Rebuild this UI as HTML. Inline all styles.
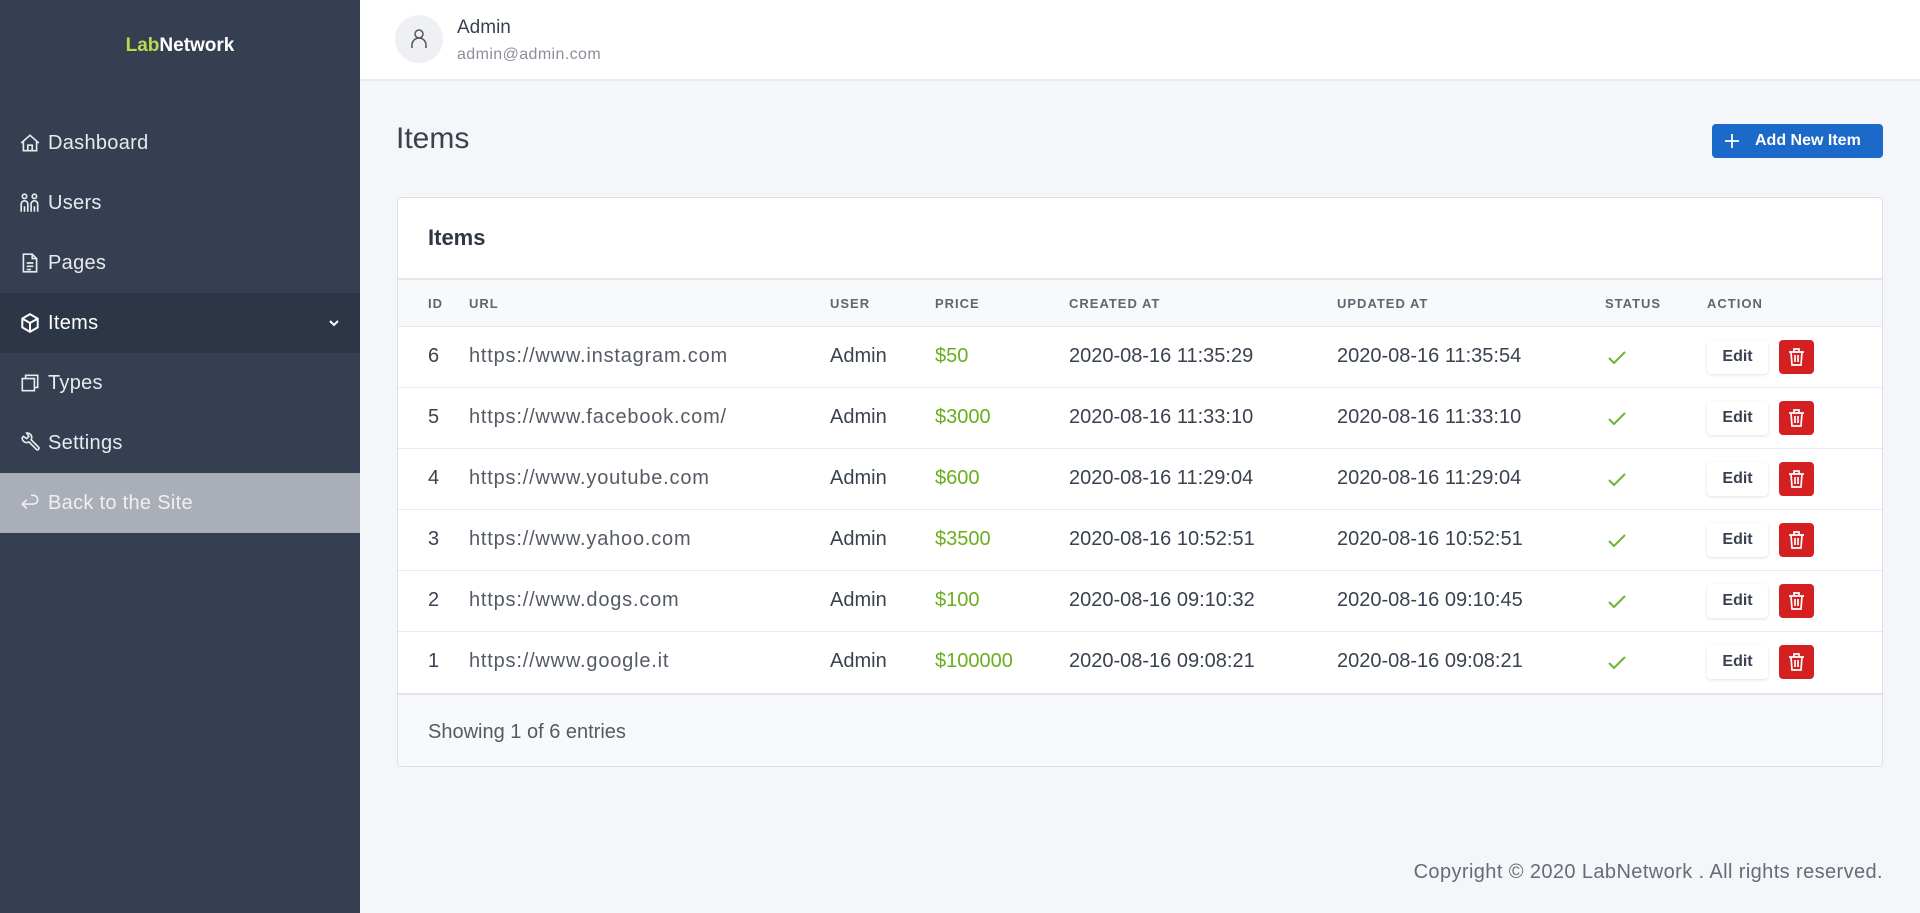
<!DOCTYPE html>
<html><head><meta charset="utf-8"><style>
*{box-sizing:border-box;margin:0;padding:0}
body{width:1920px;height:913px;overflow:hidden;background:#f4f6f9;font-family:"Liberation Sans",sans-serif;color:#3a4250;position:relative}
.side{position:absolute;left:0;top:0;width:360px;height:913px;background:#353f51}
.logo{position:absolute;top:35px;width:360px;text-align:center;font-weight:bold;font-size:19px;color:#fff}
.logo span{color:#b5dc50}
.nav{position:absolute;left:0;width:360px;height:60px;color:#e8eaee;font-size:20px;line-height:60px;padding-left:48px;letter-spacing:0.3px}
.nav svg{position:absolute;left:19px;top:19px}
.act{background:#2d3646;color:#fff}
.back{background:#a9aeb7;color:#eef0f3}
.hdr{position:absolute;left:360px;top:0;right:0;height:81px;background:#fff;border-bottom:2px solid #e6e9ee}
.av{position:absolute;left:395px;top:15px;width:48px;height:48px;border-radius:50%;background:#eef0f4}
.t{position:absolute;white-space:nowrap}
.card{position:absolute;left:397px;top:197px;width:1486px;height:570px;background:#fff;border:1px solid #dcdfe4;border-radius:4px;overflow:hidden}
.th{position:absolute;left:0;top:80px;width:100%;height:49px;background:#f8f9fa;border-top:2px solid #e4e7eb;border-bottom:1px solid #e4e7eb}
.th div{position:absolute;top:16px;font-size:13px;font-weight:bold;color:#5f6670;letter-spacing:1px}
.row{position:absolute;left:0;width:100%;height:61px;border-bottom:1px solid #e8eaed;font-size:20px;color:#3a4250}
.row div{position:absolute;top:18px;white-space:nowrap}
.u{color:#555b65;letter-spacing:0.8px}
.foot{position:absolute;left:0;top:495px;width:100%;height:75px;background:#f8f9fa;border-top:2px solid #e1e4e8}
.edit{top:13px!important;width:61px;height:34px;border-radius:4px;background:#fff;box-shadow:0 1px 3px rgba(0,0,0,.12);font-size:16px;font-weight:bold;text-align:center;line-height:34px;color:#3a4250}
.del{top:13px!important;width:35px;height:34px;border-radius:4px;background:#d42020}
</style></head><body>
<div class="side">
<div class="logo"><span>Lab</span>Network</div>
<div class="nav" style="top:113px"><svg width="22" height="22" viewBox="0 0 20 20" fill="none" stroke="#e8eaee" stroke-width="1.5"><path d="M2 10L10 3l8 7M4 8v9h12V8M8 17v-5h4v5"/></svg>Dashboard</div>
<div class="nav" style="top:173px"><svg width="22" height="22" viewBox="0 0 20 20" fill="none" stroke="#e8eaee" stroke-width="1.5"><circle cx="5" cy="4" r="2"/><circle cx="14" cy="4" r="2"/><path d="M2 18v-7a3 3 0 0 1 6 0v7M5 13v5M11 18v-7a3 3 0 0 1 6 0v7M14 13v5"/></svg>Users</div>
<div class="nav" style="top:233px"><svg width="22" height="22" viewBox="0 0 20 20" fill="none" stroke="#e8eaee" stroke-width="1.5"><path d="M4 2h8l4 4v12H4zM12 2v4h4M7 10h6M7 13h6M7 16h4"/></svg>Pages</div>
<div class="nav act" style="top:293px"><svg width="22" height="22" viewBox="0 0 20 20" fill="none" stroke="#fff" stroke-width="1.8"><path d="M10 2l7 4v8l-7 4-7-4V6zM3 6l7 4 7-4M10 10v8"/></svg>Items<svg style="left:328px;top:24px" width="12" height="12" viewBox="0 0 12 12" fill="none" stroke="#fff" stroke-width="2"><path d="M2 4l4 4 4-4"/></svg></div>
<div class="nav" style="top:353px"><svg width="22" height="22" viewBox="0 0 20 20" fill="none" stroke="#e8eaee" stroke-width="1.5"><path d="M6 6V3h11v11h-3M3 6h11v11H3z"/></svg>Types</div>
<div class="nav" style="top:413px"><svg width="22" height="22" viewBox="0 0 20 20" fill="none" stroke="#e8eaee" stroke-width="1.5"><path d="M3 5a4 4 0 0 0 6 4l7 7a1.5 1.5 0 0 0 2-2l-7-7a4 4 0 0 0-4-6l2 3-2 2-3-2z"/></svg>Settings</div>
<div class="nav back" style="top:473px"><svg width="22" height="22" viewBox="0 0 20 20" fill="none" stroke="#eef0f3" stroke-width="1.5"><path d="M7 7L3 11l4 4M3 11h10a4 4 0 0 0 0-8h-2"/></svg>Back to the Site</div>
</div>
<div class="hdr"></div>
<div class="av"><svg style="position:absolute;left:15px;top:13px" width="18" height="22" viewBox="0 0 18 22" fill="none" stroke="#555" stroke-width="1.5"><circle cx="9" cy="6" r="4"/><path d="M2 20v-3a7 7 0 0 1 14 0v3"/></svg></div>
<div class="t" style="left:457px;top:17px;font-size:19px;color:#3a4250">Admin</div>
<div class="t" style="left:457px;top:46px;font-size:16px;color:#8a9099;letter-spacing:0.4px">admin@admin.com</div>
<div class="t" style="left:396px;top:122px;font-size:30px;color:#3a4250">Items</div>
<div style="position:absolute;left:1712px;top:124px;width:171px;height:34px;background:#1b6ac9;border-radius:4px;color:#fff;font-weight:bold;font-size:16px;line-height:34px"><svg style="position:absolute;left:12px;top:9px" width="16" height="16" viewBox="0 0 16 16" stroke="#fff" stroke-width="1.8"><path d="M8 1v14M1 8h14"/></svg><span style="position:absolute;left:43px">Add New Item</span></div>
<div class="card">
<div class="t" style="left:30px;top:27px;font-size:22px;font-weight:bold;color:#2f3645">Items</div>
<div class="th"><div style="left:30px">ID</div><div style="left:71px">URL</div><div style="left:432px">USER</div><div style="left:537px">PRICE</div><div style="left:671px">CREATED AT</div><div style="left:939px">UPDATED AT</div><div style="left:1207px">STATUS</div><div style="left:1309px">ACTION</div></div>
<div class="row" style="top:129px"><div style="left:30px">6</div><div class="u" style="left:71px">https://www.instagram.com</div><div style="left:432px">Admin</div><div style="left:537px;color:#6aae1e">$50</div><div style="left:671px">2020-08-16 11:35:29</div><div style="left:939px">2020-08-16 11:35:54</div><div style="left:1209px;top:22px"><svg width="20" height="16" viewBox="0 0 20 16" fill="none" stroke="#6bb52e" stroke-width="2"><path d="M2 8l5 5L18 2"/></svg></div><div class="edit" style="left:1309px">Edit</div><div class="del" style="left:1381px"><svg style="position:absolute;left:9px;top:7px" width="17" height="20" viewBox="0 0 17 20" fill="none" stroke="#fff" stroke-width="1.7"><path d="M1 5h15M6 5V2h5v3M3 5l1 13h9l1-13M7 8v7M10 8v7"/></svg></div></div>
<div class="row" style="top:190px"><div style="left:30px">5</div><div class="u" style="left:71px">https://www.facebook.com/</div><div style="left:432px">Admin</div><div style="left:537px;color:#6aae1e">$3000</div><div style="left:671px">2020-08-16 11:33:10</div><div style="left:939px">2020-08-16 11:33:10</div><div style="left:1209px;top:22px"><svg width="20" height="16" viewBox="0 0 20 16" fill="none" stroke="#6bb52e" stroke-width="2"><path d="M2 8l5 5L18 2"/></svg></div><div class="edit" style="left:1309px">Edit</div><div class="del" style="left:1381px"><svg style="position:absolute;left:9px;top:7px" width="17" height="20" viewBox="0 0 17 20" fill="none" stroke="#fff" stroke-width="1.7"><path d="M1 5h15M6 5V2h5v3M3 5l1 13h9l1-13M7 8v7M10 8v7"/></svg></div></div>
<div class="row" style="top:251px"><div style="left:30px">4</div><div class="u" style="left:71px">https://www.youtube.com</div><div style="left:432px">Admin</div><div style="left:537px;color:#6aae1e">$600</div><div style="left:671px">2020-08-16 11:29:04</div><div style="left:939px">2020-08-16 11:29:04</div><div style="left:1209px;top:22px"><svg width="20" height="16" viewBox="0 0 20 16" fill="none" stroke="#6bb52e" stroke-width="2"><path d="M2 8l5 5L18 2"/></svg></div><div class="edit" style="left:1309px">Edit</div><div class="del" style="left:1381px"><svg style="position:absolute;left:9px;top:7px" width="17" height="20" viewBox="0 0 17 20" fill="none" stroke="#fff" stroke-width="1.7"><path d="M1 5h15M6 5V2h5v3M3 5l1 13h9l1-13M7 8v7M10 8v7"/></svg></div></div>
<div class="row" style="top:312px"><div style="left:30px">3</div><div class="u" style="left:71px">https://www.yahoo.com</div><div style="left:432px">Admin</div><div style="left:537px;color:#6aae1e">$3500</div><div style="left:671px">2020-08-16 10:52:51</div><div style="left:939px">2020-08-16 10:52:51</div><div style="left:1209px;top:22px"><svg width="20" height="16" viewBox="0 0 20 16" fill="none" stroke="#6bb52e" stroke-width="2"><path d="M2 8l5 5L18 2"/></svg></div><div class="edit" style="left:1309px">Edit</div><div class="del" style="left:1381px"><svg style="position:absolute;left:9px;top:7px" width="17" height="20" viewBox="0 0 17 20" fill="none" stroke="#fff" stroke-width="1.7"><path d="M1 5h15M6 5V2h5v3M3 5l1 13h9l1-13M7 8v7M10 8v7"/></svg></div></div>
<div class="row" style="top:373px"><div style="left:30px">2</div><div class="u" style="left:71px">https://www.dogs.com</div><div style="left:432px">Admin</div><div style="left:537px;color:#6aae1e">$100</div><div style="left:671px">2020-08-16 09:10:32</div><div style="left:939px">2020-08-16 09:10:45</div><div style="left:1209px;top:22px"><svg width="20" height="16" viewBox="0 0 20 16" fill="none" stroke="#6bb52e" stroke-width="2"><path d="M2 8l5 5L18 2"/></svg></div><div class="edit" style="left:1309px">Edit</div><div class="del" style="left:1381px"><svg style="position:absolute;left:9px;top:7px" width="17" height="20" viewBox="0 0 17 20" fill="none" stroke="#fff" stroke-width="1.7"><path d="M1 5h15M6 5V2h5v3M3 5l1 13h9l1-13M7 8v7M10 8v7"/></svg></div></div>
<div class="row" style="top:434px;border-bottom:none"><div style="left:30px">1</div><div class="u" style="left:71px">https://www.google.it</div><div style="left:432px">Admin</div><div style="left:537px;color:#6aae1e">$100000</div><div style="left:671px">2020-08-16 09:08:21</div><div style="left:939px">2020-08-16 09:08:21</div><div style="left:1209px;top:22px"><svg width="20" height="16" viewBox="0 0 20 16" fill="none" stroke="#6bb52e" stroke-width="2"><path d="M2 8l5 5L18 2"/></svg></div><div class="edit" style="left:1309px">Edit</div><div class="del" style="left:1381px"><svg style="position:absolute;left:9px;top:7px" width="17" height="20" viewBox="0 0 17 20" fill="none" stroke="#fff" stroke-width="1.7"><path d="M1 5h15M6 5V2h5v3M3 5l1 13h9l1-13M7 8v7M10 8v7"/></svg></div></div>
<div class="foot"><div class="t" style="left:30px;top:26px;font-size:20px;color:#555b65">Showing 1 of 6 entries</div></div>
</div>
<div class="t" style="right:37px;top:861px;font-size:20px;color:#666c75;letter-spacing:0.4px">Copyright © 2020 LabNetwork . All rights reserved.</div>
</body></html>
